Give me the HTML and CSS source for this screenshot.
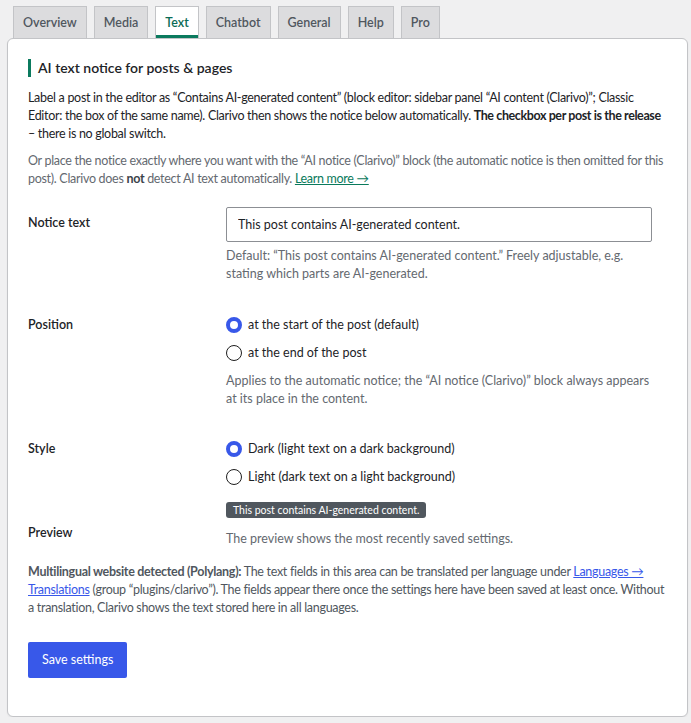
FILE: index.html
```html
<!DOCTYPE html>
<html lang="en">
<head>
    <meta charset="UTF-8">
    <meta name="viewport" content="width=device-width, initial-scale=1.0">
    <title>Clarivo - Text</title>
    <link rel="stylesheet" href="styles.css">
</head>
<body>
    <div class="wrap">
        <nav class="tabs">
            <a class="tab" href="#">Overview</a>
            <a class="tab" href="#">Media</a>
            <a class="tab active" href="#">Text</a>
            <a class="tab" href="#">Chatbot</a>
            <a class="tab" href="#">General</a>
            <a class="tab" href="#">Help</a>
            <a class="tab" href="#">Pro</a>
        </nav>
        <div class="card">
            <h2 class="section-title">AI text notice for posts &amp; pages</h2>
            <p class="intro">Label a post in the editor as “Contains AI-generated content” (block editor: sidebar panel “AI content (Clarivo)”; Classic Editor: the box of the same name). Clarivo then shows the notice below automatically. <strong>The checkbox per post is the release</strong> – there is no global switch.</p>
            <p class="intro muted">Or place the notice exactly where you want with the “AI notice (Clarivo)” block (the automatic notice is then omitted for this post). Clarivo does <strong>not</strong> detect AI text automatically. <a class="learn" href="#">Learn more →</a></p>

            <div class="field-row row-notice">
                <div class="field-label">Notice text</div>
                <div class="field-body">
                    <input class="text-input" type="text" value="This post contains AI-generated content.">
                    <p class="description">Default: “This post contains AI-generated content.” Freely adjustable, e.g. stating which parts are AI-generated.</p>
                </div>
            </div>

            <div class="field-row row-position">
                <div class="field-label">Position</div>
                <div class="field-body">
                    <label class="radio"><input type="radio" name="position" checked> at the start of the post (default)</label>
                    <label class="radio"><input type="radio" name="position"> at the end of the post</label>
                    <p class="description">Applies to the automatic notice; the “AI notice (Clarivo)” block always appears at its place in the content.</p>
                </div>
            </div>

            <div class="field-row row-style">
                <div class="field-label">Style</div>
                <div class="field-body">
                    <label class="radio"><input type="radio" name="style" checked> Dark (light text on a dark background)</label>
                    <label class="radio"><input type="radio" name="style"> Light (dark text on a light background)</label>
                    <span class="notice-preview">This post contains AI-generated content.</span>
                </div>
            </div>

            <div class="field-row row-preview">
                <div class="field-label">Preview</div>
                <div class="field-body">
                    <p class="description">The preview shows the most recently saved settings.</p>
                </div>
            </div>

            <p class="multilang"><strong>Multilingual website detected (Polylang):</strong> The text fields in this area can be translated per language under <a href="#">Languages → Translations</a> (group “plugins/clarivo”). The fields appear there once the settings here have been saved at least once. Without a translation, Clarivo shows the text stored here in all languages.</p>

            <button class="save-btn">Save settings</button>
        </div>
    </div>
</body>
</html>
```

FILE: styles.css
```css
body {
    margin: 0;
    background: #f0f0f1;
    color: #1d2327;
    font-family: Lato, "Open Sans", Arial, sans-serif;
    font-size: 12.5px;
    line-height: 18px;
}
.wrap {
    padding: 6px 3px 0 7px;
}
.tabs {
    display: flex;
    gap: 7px;
    padding-left: 6px;
}
.tab {
    display: block;
    height: 31px;
    line-height: 31px;
    padding: 0 9px;
    background: #dcdcde;
    border: 1px solid #c3c4c7;
    border-bottom: none;
    color: #50575e;
    font-weight: 600;
    font-size: 12.5px;
    text-decoration: none;
}
.tab.active {
    background: #fff;
    color: #0a6b55;
    box-shadow: inset 0 -3px 0 #0b7a5e;
}
.card {
    background: #fff;
    border: 1px solid #c3c4c7;
    border-radius: 6px;
    padding: 20px 20px 38px 20px;
    box-shadow: 0 1px 2px rgba(0, 0, 0, 0.06);
}
.section-title {
    margin: 0;
    font-size: 14px;
    line-height: 18px;
    font-weight: 600;
    border-left: 3px solid #0b7a5e;
    padding-left: 7px;
}
.intro {
    margin: 12px 0 0;
    letter-spacing: -0.3px;
}
.intro strong {
    letter-spacing: -0.4px;
}
.intro.muted {
    margin-top: 9px;
    color: #646970;
    letter-spacing: -0.3px;
}
.intro.muted strong {
    color: #3c434a;
    letter-spacing: -0.3px;
}
.learn {
    color: #0a7a5c;
}
.field-row {
    display: grid;
    grid-template-columns: 198px 430px;
}
.field-label {
    font-weight: 600;
}
.row-notice {
    margin-top: 19px;
}
.row-notice .field-label {
    padding-top: 7px;
}
.row-position {
    margin-top: 33px;
}
.row-style {
    margin-top: 32px;
}
.row-preview {
    margin-top: 5px;
}
.row-preview .field-body {
    padding-top: 6px;
}
.text-input {
    display: block;
    box-sizing: border-box;
    width: 426px;
    height: 35px;
    margin: 0;
    padding: 0 11px;
    border: 1px solid #8c8f94;
    border-radius: 2px;
    font: inherit;
    color: #1d2327;
}
.description {
    margin: 0;
    color: #646970;
}
.row-notice .description {
    margin-top: 5px;
}
.radio {
    display: flex;
    align-items: center;
    gap: 6px;
    margin-bottom: 10px;
    color: #1d2327;
}
.radio input {
    appearance: none;
    box-sizing: border-box;
    width: 16px;
    height: 16px;
    margin: 0;
    border: 1px solid #1e1e1e;
    border-radius: 50%;
    background: #fff;
}
.radio input:checked {
    border: 4.5px solid #3858e9;
}
.notice-preview {
    display: inline-block;
    margin-top: 6px;
    height: 16px;
    line-height: 16px;
    padding: 0 7px;
    background: #50575e;
    color: #fff;
    border-radius: 3px;
    font-size: 10.5px;
}
.multilang {
    margin: 15px 0 0;
    color: #50575e;
    letter-spacing: -0.3px;
}
.multilang a {
    color: #3858e9;
}
.save-btn {
    display: block;
    margin-top: 25px;
    height: 36px;
    padding: 0 14px;
    background: #3858e9;
    color: #fff;
    border: none;
    border-radius: 2px;
    font: inherit;
    cursor: pointer;
}
```
